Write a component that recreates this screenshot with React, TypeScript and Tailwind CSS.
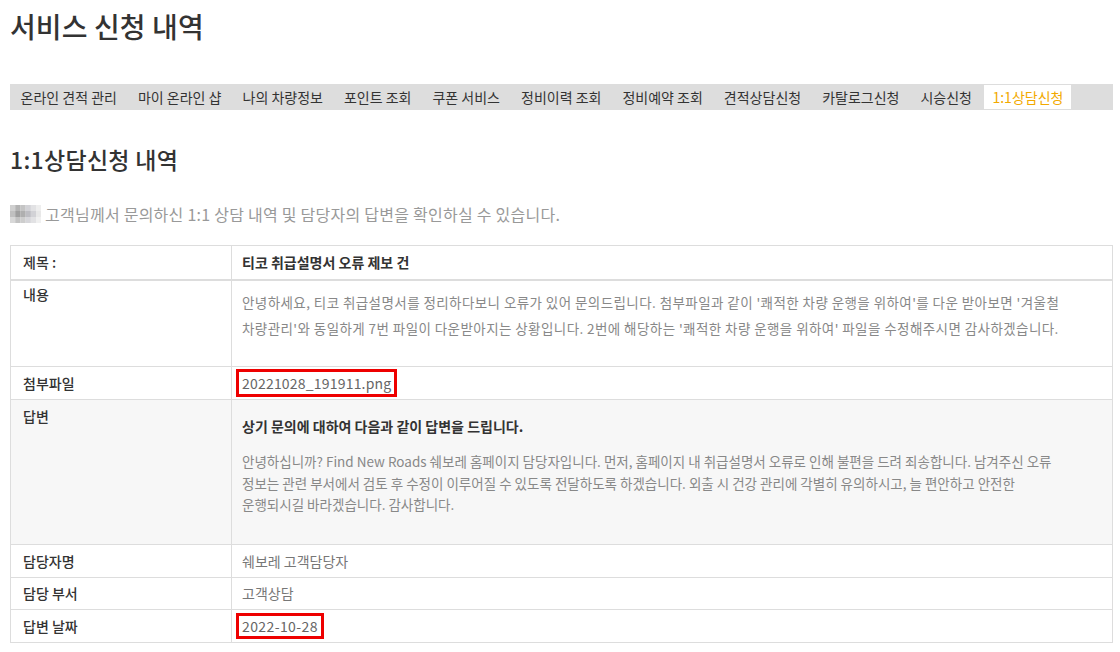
import React from "react";

const navItems = [
  "온라인 견적 관리",
  "마이 온라인 샵",
  "나의 차량정보",
  "포인트 조회",
  "쿠폰 서비스",
  "정비이력 조회",
  "정비예약 조회",
  "견적상담신청",
  "카탈로그신청",
  "시승신청",
];

function Mosaic() {
  const cells = [
    ["#cfcfcf", "#b3b3b3", "#c4c4c4", "#d2d2d6", "#e2e2e4", "#eeeeee"],
    ["#c0c0c0", "#9f9f9f", "#afafaf", "#bdbdc2", "#d2d2d6", "#e8e8e8"],
    ["#d8d8d8", "#c2c2c2", "#cdcdcd", "#d6d6da", "#e2e2e4", "#f0f0f0"],
  ];
  return (
    <svg width="31" height="18" viewBox="0 0 31 18" className="shrink-0">
      {cells.map((row, r) =>
        row.map((c, i) => (
          <rect key={`${r}-${i}`} x={i * 5.2} y={r * 6} width="5.3" height="6.1" fill={c} />
        ))
      )}
    </svg>
  );
}

function Row({
  label,
  children,
  className = "",
  labelClass = "items-center",
  valueClass = "items-center",
}: {
  label: string;
  children: React.ReactNode;
  className?: string;
  labelClass?: string;
  valueClass?: string;
}) {
  return (
    <div className={`grid grid-cols-[221px_1fr] border-b border-[#dddddd] ${className}`}>
      <div className={`flex pl-[12px] text-[14px] text-[#333333] font-medium border-r border-[#dddddd] ${labelClass}`}>
        {label}
      </div>
      <div className={`flex pl-[10px] ${valueClass}`}>{children}</div>
    </div>
  );
}

export default function App() {
  return (
    <div
      className="w-[1120px] h-[652px] bg-white overflow-hidden"
      style={{ fontFamily: '"Noto Sans CJK KR", "Noto Sans", sans-serif' }}
    >
      <div className="pl-[10px] pr-[7px]">
        <h1 className="pt-[8px] text-[28px] leading-[36px] text-[#333333] font-medium tracking-[0.1px]">
          서비스 신청 내역
        </h1>

        <nav className="mt-[40px] h-[26px] bg-[#dddddd] flex items-stretch">
          {navItems.map((t) => (
            <div key={t} className="px-[10.5px] flex items-center text-[14px] text-[#333333] whitespace-nowrap">
              {t}
            </div>
          ))}
          <div className="my-[1px] ml-[2px] px-[8px] bg-white flex items-center text-[14px] text-[#f2a900] whitespace-nowrap">
            1:1상담신청
          </div>
        </nav>

        <h2 className="mt-[34px] text-[23px] leading-[30px] text-[#333333] font-medium tracking-[0.3px]">
          1:1상담신청 내역
        </h2>

        <div className="mt-[29px] flex items-center gap-[4px] h-[22px]">
          <Mosaic />
          <span className="text-[16px] text-[#999999] tracking-[0.25px]">
            고객님께서 문의하신 1:1 상담 내역 및 담당자의 답변을 확인하실 수 있습니다.
          </span>
        </div>

        <div className="mt-[20px] border-l border-r border-t border-[#dddddd]">
          <div className="grid grid-cols-[221px_1fr] border-b-[2px] border-[#dddddd] h-[35px]">
            <div className="flex items-center pl-[12px] text-[14px] text-[#333333] font-medium border-r border-[#dddddd]">
              제목 :
            </div>
            <div className="flex items-center pl-[10px] text-[14px] text-[#333333] font-semibold">
              티코 취급설명서 오류 제보 건
            </div>
          </div>

          <Row label="내용" className="h-[86px]" labelClass="items-start pt-[3px]" valueClass="items-start pt-[8px]">
            <p className="text-[13.5px] leading-[26px] text-[#888888] tracking-[0.42px]">
              안녕하세요, 티코 취급설명서를 정리하다보니 오류가 있어 문의드립니다. 첨부파일과 같이 '쾌적한 차량 운행을 위하여'를 다운 받아보면 '겨울철
              <br />
              차량관리'와 동일하게 7번 파일이 다운받아지는 상황입니다. 2번에 해당하는 '쾌적한 차량 운행을 위하여' 파일을 수정해주시면 감사하겠습니다.
            </p>
          </Row>

          <Row label="첨부파일" className="h-[33px]" valueClass="items-center !pl-[4px]">
            <span className="border-[3px] border-[#ee0000] px-[3px] text-[14px] leading-[22px] text-[#666666] tracking-[0.2px]">
              20221028_191911.png
            </span>
          </Row>

          <Row
            label="답변"
            className="h-[145px] bg-[#f7f7f7]"
            labelClass="items-start pt-[6px]"
            valueClass="flex-col items-start pt-[15px]"
          >
            <p className="text-[14px] leading-[22px] text-[#333333] font-semibold">
              상기 문의에 대하여 다음과 같이 답변을 드립니다.
            </p>
            <p className="mt-[14px] text-[13.5px] leading-[21.5px] text-[#888888]">
              안녕하십니까? Find New Roads 쉐보레 홈페이지 담당자입니다. 먼저, 홈페이지 내 취급설명서 오류로 인해 불편을 드려 죄송합니다. 남겨주신 오류
              <br />
              정보는 관련 부서에서 검토 후 수정이 이루어질 수 있도록 전달하도록 하겠습니다. 외출 시 건강 관리에 각별히 유의하시고, 늘 편안하고 안전한
              <br />
              운행되시길 바라겠습니다. 감사합니다.
            </p>
          </Row>

          <Row label="담당자명" className="h-[33px]">
            <span className="text-[14px] text-[#777777]">쉐보레 고객담당자</span>
          </Row>
          <Row label="담당 부서" className="h-[32px]">
            <span className="text-[14px] text-[#777777]">고객상담</span>
          </Row>
          <Row label="답변 날짜" className="h-[33px]" valueClass="items-center !pl-[4px]">
            <span className="border-[3px] border-[#ee0000] px-[3px] text-[14px] leading-[20px] text-[#666666] tracking-[0.4px]">
              2022-10-28
            </span>
          </Row>
        </div>
      </div>
    </div>
  );
}
